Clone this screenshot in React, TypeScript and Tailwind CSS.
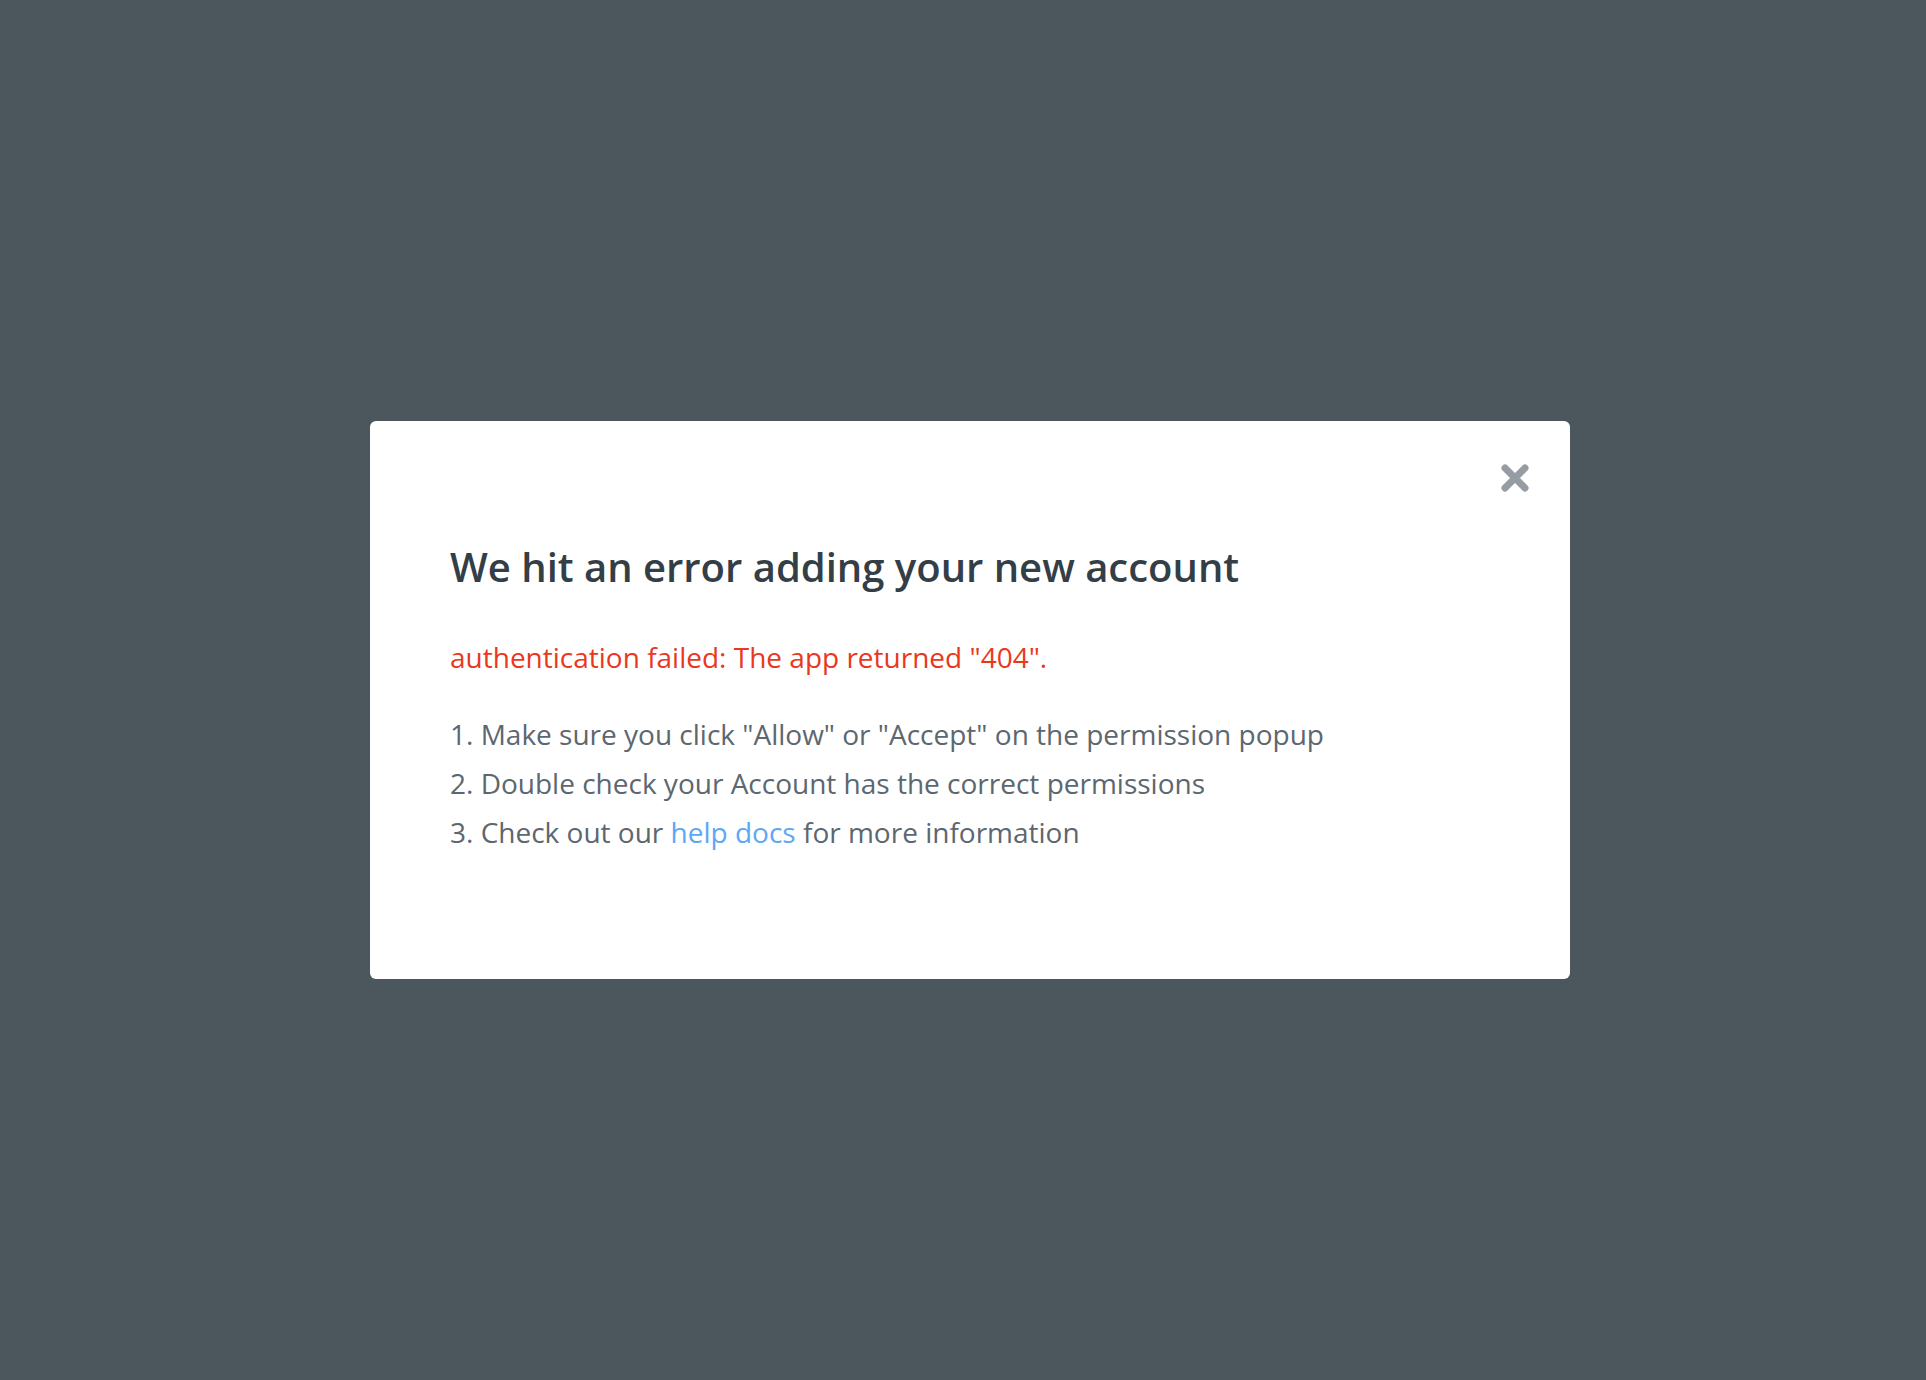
import React from 'react'

const font = { fontFamily: '"Open Sans", "Noto Sans", Arial, sans-serif' }

const CloseIcon = () => (
    <svg viewBox="0 0 32 32" className="h-8 w-8" fill="none">
        <path
            d="M6 6 L26 26 M26 6 L6 26"
            stroke="#959ca3"
            strokeWidth="7"
            strokeLinecap="round"
        />
    </svg>
)

export default function App() {
    return (
        <div
            className="flex min-h-screen w-full items-center justify-center bg-[#4c565d] pl-[14px] pt-[20px]"
            style={font}
        >
            {/* 弹窗 */}
            <div className="relative w-[1200px] rounded-md bg-white pl-[80px] pr-[80px] pt-[122px] pb-[122px]">
                <button className="absolute right-[39px] top-[41px] flex items-center justify-center">
                    <CloseIcon />
                </button>

                <h2 className="text-[40px] font-semibold leading-[48px] text-[#333e47]">
                    We hit an error adding your new account
                </h2>

                <p className="mt-[46px] text-[28px] leading-[40px] text-[#e9381d]">
                    authentication failed: The app returned "404".
                </p>

                <ol className="mt-[33px] text-[28px] leading-[49px] text-[#5c676f]">
                    <li>1. Make sure you click "Allow" or "Accept" on the permission popup</li>
                    <li>2. Double check your Account has the correct permissions</li>
                    <li>
                        3. Check out our <a className="text-[#5ea7f4]">help docs</a> for more information
                    </li>
                </ol>
            </div>
        </div>
    )
}
